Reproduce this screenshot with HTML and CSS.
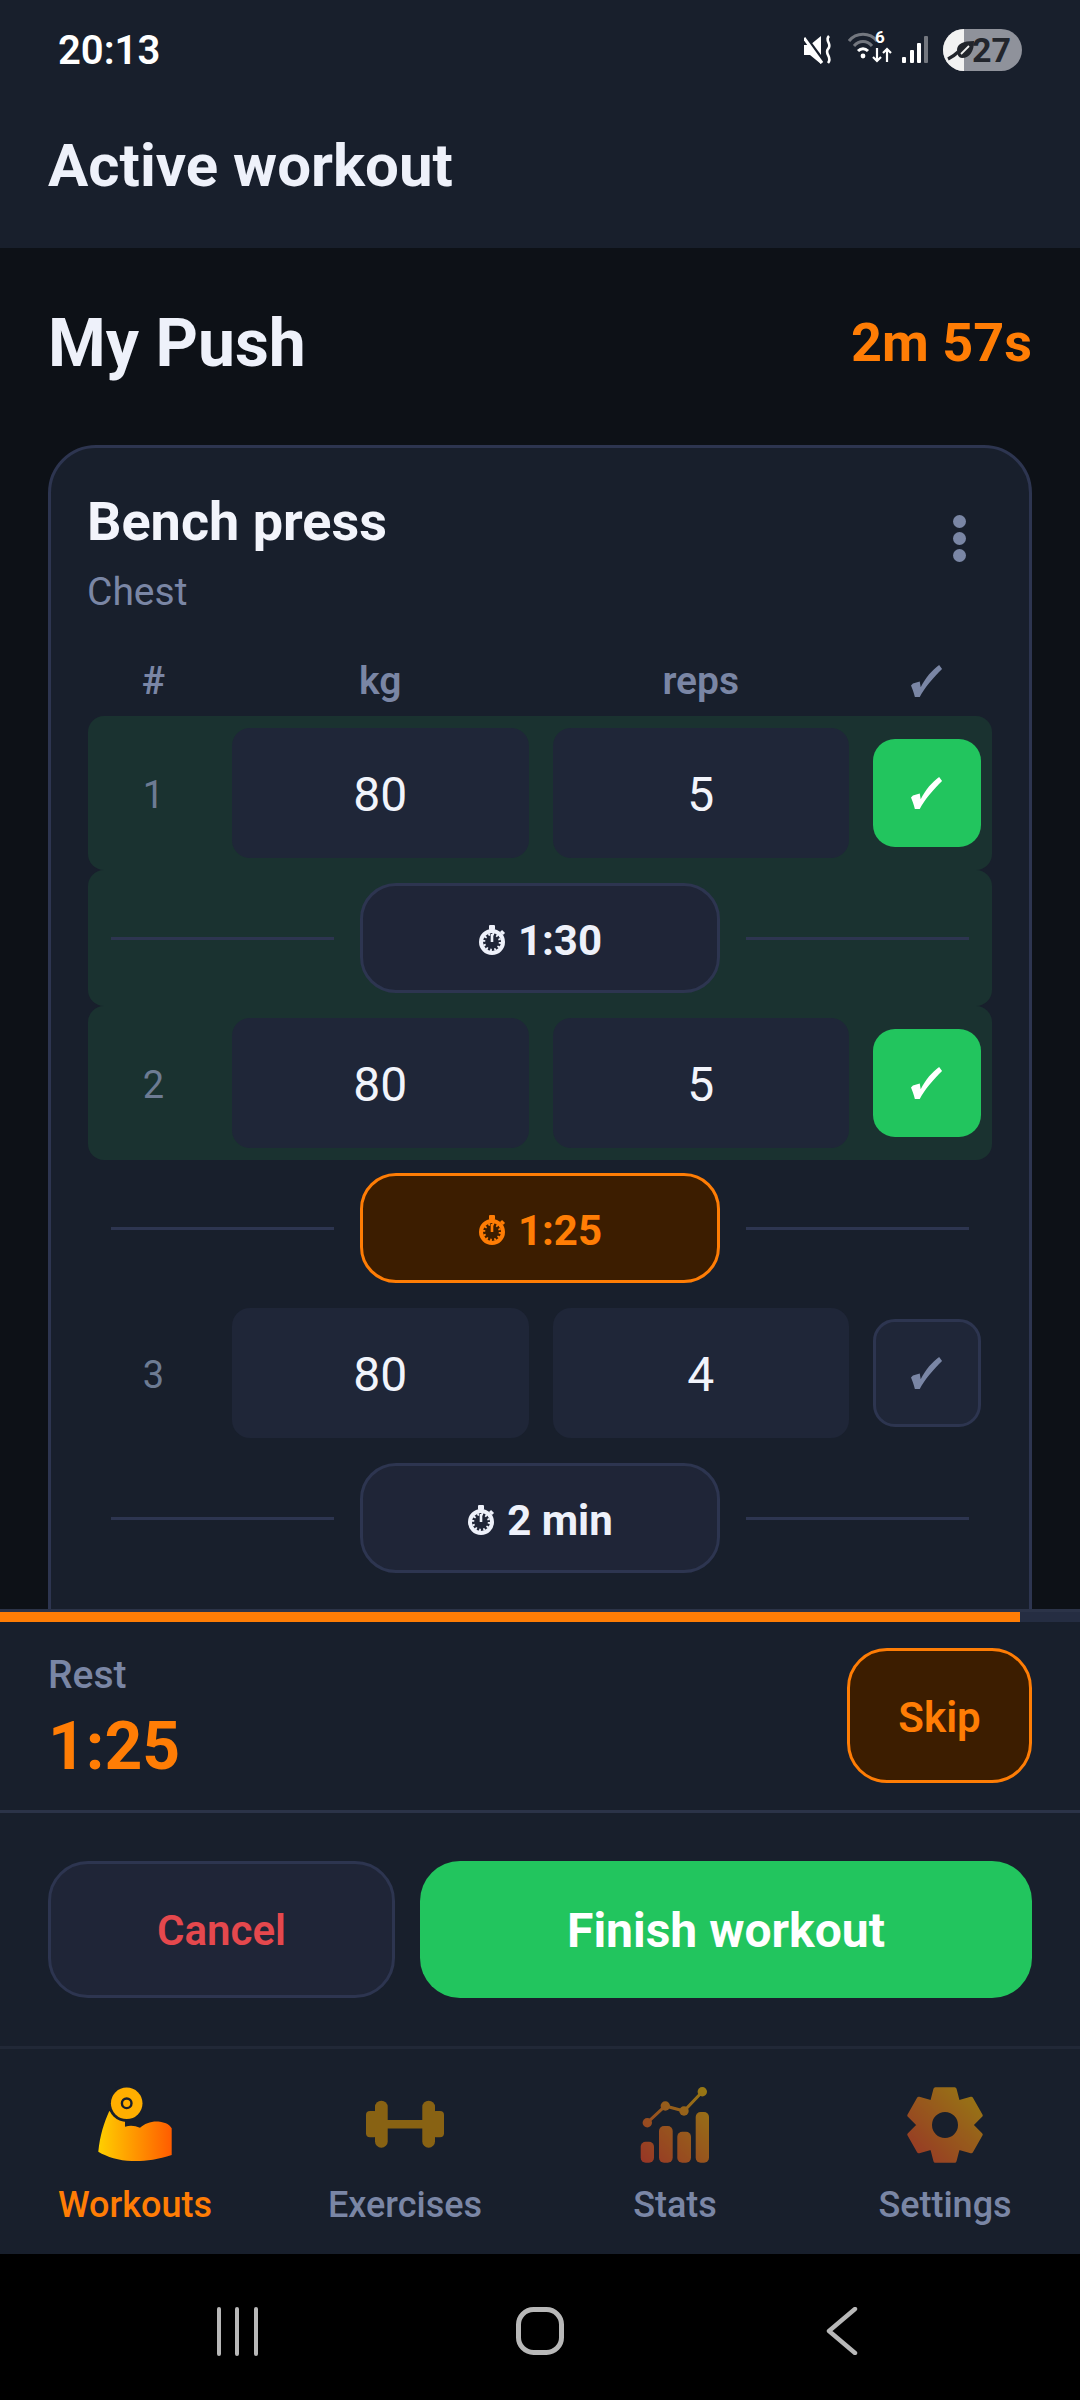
FILE: index.html
```html
<!DOCTYPE html>
<html lang="en">
<head>
    <meta charset="UTF-8">
    <meta name="viewport" content="width=device-width, initial-scale=1.0">
    <title>Active workout</title>
    <link rel="stylesheet" href="styles.css">
</head>
<body>
    <svg class="defs" width="0" height="0">
        <defs>
            <linearGradient id="arm-grad" gradientUnits="userSpaceOnUse" x1="3" y1="0" x2="78" y2="0">
                <stop offset="0" stop-color="#ffd000"/>
                <stop offset="1" stop-color="#ff5a00"/>
            </linearGradient>
            <linearGradient id="nav-grad" gradientUnits="userSpaceOnUse" x1="5" y1="75" x2="75" y2="5">
                <stop offset="0" stop-color="#ff4a22"/>
                <stop offset="1" stop-color="#ffc400"/>
            </linearGradient>
            <symbol id="watch" viewBox="0 0 28 30">
                <rect x="11" y="0" width="6" height="5" rx="1" fill="currentColor"/>
                <path d="M23 6 L26 9" stroke="currentColor" stroke-width="3" fill="none"/>
                <circle cx="14" cy="17" r="11" fill="none" stroke="currentColor" stroke-width="4"/>
                <circle cx="14" cy="17" r="8" fill="none" stroke="currentColor" stroke-width="2.4" stroke-dasharray="1.8 2.4"/>
                <path d="M14 9 V17" stroke="currentColor" stroke-width="2.6" fill="none"/>
            </symbol>
            <symbol id="check" viewBox="0 0 34 36">
                <path d="M0 22 L2 20 L9 18 L10 24 C15 14 22 6 29 1 L32 5 C23 14 14 24 9 34 L4 34 C3 29 1 25 0 22 Z" fill="currentColor"/>
            </symbol>
        </defs>
    </svg>

    <div class="screen">
        <header class="top">
            <div class="status-bar">
                <span class="clock">20:13</span>
                <div class="status-icons">
                    <svg class="ic-mute" width="30" height="30" viewBox="0 0 30 30">
                        <path d="M0 10 H6 L17 1 V29 L6 20 H0 Z" fill="#fff"/>
                        <path d="M1 1 L21 28" stroke="#181f2c" stroke-width="3"/>
                        <path d="M0 3 L18 28" stroke="#fff" stroke-width="3"/>
                        <path d="M25 1 C20 6 29 9 24 14 C20 19 29 22 24 28" stroke="#fff" stroke-width="2.6" fill="none"/>
                    </svg>
                    <div class="wifi">
                        <svg width="30" height="30" viewBox="0 0 30 30">
                            <path d="M1 12 C8 3 22 3 29 12" stroke="#73777f" stroke-width="3" fill="none"/>
                            <path d="M6 17 C11 11 19 11 24 17" stroke="#73777f" stroke-width="3" fill="none"/>
                            <path d="M10 22 C13 19 17 19 20 22" stroke="#fff" stroke-width="3" fill="none"/>
                            <circle cx="15" cy="27" r="2.4" fill="#fff"/>
                        </svg>
                        <span class="wifi-six">6</span>
                        <svg class="wifi-arrows" width="20" height="16" viewBox="0 0 20 16">
                            <path d="M5 1 V14 M1 10 L5 14 L9 10" stroke="#fff" stroke-width="2.2" fill="none"/>
                            <path d="M15 15 V2 M11 6 L15 2 L19 6" stroke="#fff" stroke-width="2.2" fill="none"/>
                        </svg>
                    </div>
                    <svg width="26" height="28" viewBox="0 0 26 28">
                        <rect x="0" y="21" width="4" height="6" rx="1" fill="#fff"/>
                        <rect x="8" y="14" width="4" height="13" rx="1" fill="#fff"/>
                        <rect x="15" y="7" width="4" height="20" rx="1" fill="#fff"/>
                        <rect x="22" y="0" width="4" height="27" rx="1" fill="#73777f"/>
                    </svg>
                    <div class="battery">
                        <div class="battery-fill"></div>
                        <svg class="battery-leaf" width="79" height="42" viewBox="0 0 79 42">
                            <path d="M14 21 C14 15 20 12 31 12 C31 22 27 29 19 29 C16 29 14 26 14 21 Z" fill="#22252c"/>
                            <path d="M5 30 C9 28 12 26 15 23" stroke="#22252c" stroke-width="3.2" fill="none"/>
                            <path d="M18 25 L26 17" stroke="#f2f2f2" stroke-width="1.8" fill="none"/>
                        </svg>
                        <span class="battery-num">27</span>
                    </div>
                </div>
            </div>
            <div class="app-bar">
                <h1>Active workout</h1>
            </div>
        </header>

        <main class="content">
            <div class="workout-head">
                <h2>My Push</h2>
                <span class="elapsed">2m 57s</span>
            </div>

            <section class="card">
                <div class="card-head">
                    <div>
                        <div class="ex-name">Bench press</div>
                        <div class="ex-muscle">Chest</div>
                    </div>
                    <div class="more">
                        <span></span><span></span><span></span>
                    </div>
                </div>

                <div class="set-grid set-labels">
                    <span>#</span>
                    <span>kg</span>
                    <span>reps</span>
                    <span class="tick-label"><svg class="check"><use href="#check"/></svg></span>
                </div>

                <div class="set-grid set-row done">
                    <span class="set-num">1</span>
                    <div class="field">80</div>
                    <div class="field">5</div>
                    <button class="tick on"><svg class="check"><use href="#check"/></svg></button>
                </div>
                <div class="rest-row done">
                    <div class="rest-line"></div>
                    <button class="pill"><svg class="watch"><use href="#watch"/></svg>1:30</button>
                    <div class="rest-line"></div>
                </div>
                <div class="set-grid set-row done">
                    <span class="set-num">2</span>
                    <div class="field">80</div>
                    <div class="field">5</div>
                    <button class="tick on"><svg class="check"><use href="#check"/></svg></button>
                </div>
                <div class="rest-row">
                    <div class="rest-line"></div>
                    <button class="pill running"><svg class="watch"><use href="#watch"/></svg>1:25</button>
                    <div class="rest-line"></div>
                </div>
                <div class="set-grid set-row">
                    <span class="set-num">3</span>
                    <div class="field">80</div>
                    <div class="field">4</div>
                    <button class="tick"><svg class="check"><use href="#check"/></svg></button>
                </div>
                <div class="rest-row">
                    <div class="rest-line"></div>
                    <button class="pill"><svg class="watch"><use href="#watch"/></svg>2 min</button>
                    <div class="rest-line"></div>
                </div>
            </section>
        </main>

        <section class="rest-panel">
            <div class="progress"><div class="progress-bar"></div></div>
            <div class="rest-body">
                <div>
                    <div class="rest-label">Rest</div>
                    <div class="rest-time">1:25</div>
                </div>
                <button class="skip">Skip</button>
            </div>
        </section>

        <section class="actions">
            <button class="cancel">Cancel</button>
            <button class="finish">Finish workout</button>
        </section>

        <nav class="tabs">
            <div class="tab active">
                <svg class="tab-icon" viewBox="0 0 80 80">
                    <path d="M3.3 66.7 C5 50 9 38 14.3 26 L30 36 L30 41.7 C35 40 40 40.5 45 42.7 C50 38 58 35.5 65 36.7 C71 37.5 75 40 76.7 43.3 L76.7 70 C62 75 48 76.5 36.7 76 C24 75.5 12 72 3.3 66.7 Z" fill="url(#arm-grad)"/>
                    <circle cx="31.7" cy="18.3" r="18.6" fill="#181f2c"/>
                    <circle cx="31.7" cy="18.3" r="15.8" fill="#ffae00"/>
                    <circle cx="31.7" cy="18.3" r="4.8" fill="none" stroke="#181f2c" stroke-width="2.4"/>
                </svg>
                <span>Workouts</span>
            </div>
            <div class="tab">
                <svg class="tab-icon" viewBox="0 0 80 80">
                    <g fill="#e59a00">
                        <rect x="21" y="35" width="38" height="8.5"/>
                        <rect x="10" y="15.7" width="12.7" height="47" rx="6.3"/>
                        <rect x="57.3" y="15.7" width="12.7" height="47" rx="6.3"/>
                        <rect x="1" y="26" width="12" height="26.3" rx="4"/>
                        <rect x="67" y="26" width="12" height="26.3" rx="4"/>
                    </g>
                </svg>
                <span>Exercises</span>
            </div>
            <div class="tab">
                <svg class="tab-icon" viewBox="0 0 80 80">
                    <g fill="url(#nav-grad)">
                        <rect x="5.7" y="56.7" width="13.3" height="21" rx="5"/>
                        <rect x="24" y="41" width="13.7" height="36.7" rx="5"/>
                        <rect x="42.3" y="46.7" width="13.7" height="31" rx="5"/>
                        <rect x="60.7" y="27" width="13.3" height="50.7" rx="5"/>
                        <circle cx="12.3" cy="37.7" r="4.7"/>
                        <circle cx="30.3" cy="21" r="4.7"/>
                        <circle cx="49" cy="26" r="4.7"/>
                        <circle cx="67.3" cy="6.7" r="4.7"/>
                    </g>
                    <path d="M12.3 37.7 L30.3 21 L49 26 L67.3 6.7" fill="none" stroke="url(#nav-grad)" stroke-width="3"/>
                </svg>
                <span>Stats</span>
            </div>
            <div class="tab">
                <svg class="tab-icon" viewBox="0 0 80 80">
                    <path fill-rule="evenodd" fill="url(#nav-grad)" stroke="url(#nav-grad)" stroke-width="4" stroke-linejoin="round" d="M30.4 4.3 H49.6 L53 17.5 L66.2 13.8 L75.7 30.4 L66 40 L75.7 49.6 L66.2 66.2 L53 62.5 L49.6 75.7 H30.4 L27 62.5 L13.8 66.2 L4.3 49.6 L14 40 L4.3 30.4 L13.8 13.8 L27 17.5 Z M40 25 A15 15 0 1 0 40 55 A15 15 0 1 0 40 25 Z"/>
                </svg>
                <span>Settings</span>
            </div>
        </nav>

        <footer class="system-nav">
            <svg width="44" height="49" viewBox="0 0 44 49" class="sys-recents">
                <path d="M4 2 V47 M22 2 V47 M41 2 V47" stroke="#b8b8b8" stroke-width="4" stroke-linecap="round" fill="none"/>
            </svg>
            <svg width="48" height="48" viewBox="0 0 48 48">
                <rect x="2.5" y="2.5" width="43" height="43" rx="15" stroke="#b8b8b8" stroke-width="5" fill="none"/>
            </svg>
            <svg width="32" height="48" viewBox="0 0 32 48" class="sys-back">
                <path d="M29 2 L3 24 L29 46" stroke="#b8b8b8" stroke-width="4.4" stroke-linecap="round" stroke-linejoin="round" fill="none"/>
            </svg>
        </footer>
    </div>
</body>
</html>
```

FILE: styles.css
```css
* {
    box-sizing: border-box;
}
body {
    margin: 0;
    background-color: #0d1117;
    color: #eef1fa;
    font-family: Roboto, "Liberation Sans", sans-serif;
}
button {
    font-family: inherit;
    border: none;
    padding: 0;
    cursor: pointer;
}
.defs {
    position: absolute;
}
.screen {
    width: 1080px;
    height: 2400px;
    display: flex;
    flex-direction: column;
    overflow: hidden;
}

/* top */
.top {
    background-color: #181f2c;
}
.status-bar {
    height: 80px;
    padding: 20px 58px 0 58px;
    display: flex;
    align-items: center;
    justify-content: space-between;
}
.clock {
    font-size: 40px;
    font-weight: 600;
    color: #fff;
}
.status-icons {
    display: flex;
    align-items: center;
}
.ic-mute {
    margin-right: 14px;
}
.wifi {
    position: relative;
    width: 44px;
    height: 42px;
    margin-right: 10px;
}
.wifi svg {
    display: block;
}
.wifi-six {
    position: absolute;
    left: 27px;
    top: -2px;
    font-size: 17px;
    font-weight: 700;
    color: #fff;
}
.wifi-arrows {
    position: absolute;
    left: 24px;
    top: 18px;
}
.battery {
    position: relative;
    width: 79px;
    height: 42px;
    margin-left: 15px;
    border-radius: 21px;
    background-color: #8f929b;
    overflow: hidden;
    display: flex;
    align-items: center;
    justify-content: flex-end;
    padding-right: 11px;
}
.battery-fill {
    position: absolute;
    left: 0;
    top: 0;
    bottom: 0;
    width: 21px;
    background-color: #f2f2f2;
}
.battery-leaf {
    position: absolute;
    left: 0;
    top: 0;
}
.battery-num {
    position: relative;
    font-size: 34px;
    font-weight: 700;
    color: #22252c;
}
.app-bar {
    height: 168px;
    padding: 0 48px;
    display: flex;
    align-items: center;
}
h1 {
    margin: 2px 0 0;
    font-size: 60px;
    font-weight: 700;
    color: #eef1fa;
}

/* content */
.content {
    flex: 1;
    min-height: 0;
    overflow: hidden;
    padding: 0 48px;
}
.workout-head {
    height: 188px;
    margin-bottom: 9px;
    display: flex;
    align-items: center;
    justify-content: space-between;
}
h2 {
    margin: 2px 0 0;
    font-size: 66px;
    font-weight: 700;
    color: #eef1fa;
}
.elapsed {
    font-size: 54px;
    font-weight: 700;
    color: #ff7d05;
}
.card {
    border: 3px solid #2d3550;
    border-radius: 48px;
    background-color: #181f2c;
    padding: 0 37px 100px;
}
.card-head {
    display: flex;
    justify-content: space-between;
    margin-left: -1px;
    padding-top: 44px;
}
.ex-name {
    font-size: 54px;
    line-height: 60px;
    font-weight: 700;
    color: #f2f4fb;
}
.ex-muscle {
    margin-top: 18px;
    font-size: 39px;
    line-height: 44px;
    color: #7a86a5;
}
.more {
    display: flex;
    flex-direction: column;
    gap: 4px;
    margin: 23px 26px 0 0;
}
.more span {
    width: 13px;
    height: 13px;
    border-radius: 50%;
    background-color: #7a86a5;
}
.set-grid {
    display: grid;
    grid-template-columns: 109px 1fr 1fr 108px;
    column-gap: 24px;
    align-items: center;
    padding: 0 11px;
    text-align: center;
}
.set-labels {
    height: 72px;
    margin-top: 30px;
    padding-top: 2px;
    font-size: 39px;
    font-weight: 600;
    color: #7a86a5;
}
.tick-label {
    display: flex;
    justify-content: center;
}
.check {
    width: 33px;
    height: 35px;
}
.set-row {
    height: 154px;
}
.done {
    background-color: #1a3230;
    border-radius: 16px;
}
.set-num {
    padding-top: 4px;
    font-size: 38px;
    color: #6d7b93;
}
.field {
    height: 130px;
    border-radius: 18px;
    background-color: #1f2638;
    font-size: 48px;
    line-height: 134px;
    color: #f2f4fb;
}
.tick {
    width: 108px;
    height: 108px;
    border: 3px solid #2d3550;
    border-radius: 22px;
    background-color: #1f2638;
    display: flex;
    align-items: center;
    justify-content: center;
    color: #7a86a5;
}
.tick.on {
    border: none;
    background-color: #22c55e;
    color: #fff;
}
.rest-row {
    height: 136px;
    padding: 0 23px;
    display: flex;
    align-items: center;
    gap: 26px;
}
.rest-line {
    flex: 1;
    height: 3px;
    background-color: #2d3550;
}
.pill {
    width: 360px;
    height: 110px;
    padding-top: 4px;
    border: 3px solid #2d3550;
    border-radius: 36px;
    background-color: #1f2537;
    display: flex;
    align-items: center;
    justify-content: center;
    gap: 12px;
    font-size: 42px;
    font-weight: 700;
    color: #eef1fa;
}
.pill.running {
    border-color: #ff7d05;
    background-color: #3c1d00;
    color: #ff7d05;
}
.watch {
    width: 28px;
    height: 30px;
}

/* rest timer */
.rest-panel {
    background-color: #181f2c;
    border-bottom: 3px solid #2b3348;
}
.progress {
    height: 13px;
    border-top: 3px solid #2b3348;
    background-color: #252d42;
}
.progress-bar {
    width: 1020px;
    height: 10px;
    background-color: #ff7d05;
}
.rest-body {
    height: 188px;
    padding: 26px 48px 0;
    display: flex;
    justify-content: space-between;
    align-items: flex-start;
}
.rest-label {
    margin-top: 5px;
    font-size: 39px;
    line-height: 44px;
    font-weight: 500;
    color: #7a86a5;
}
.rest-time {
    margin-top: 12px;
    font-size: 66px;
    line-height: 76px;
    font-weight: 700;
    color: #ff7d05;
}
.skip {
    width: 185px;
    height: 135px;
    padding-top: 4px;
    border: 3px solid #ff7d05;
    border-radius: 40px;
    background-color: #3c1d00;
    font-size: 42px;
    font-weight: 600;
    color: #ff7d05;
}

/* bottom */
.actions {
    height: 233px;
    padding: 48px 48px 0;
    display: flex;
    gap: 25px;
    background-color: #181f2c;
}
.cancel, .finish {
    height: 137px;
    padding-top: 2px;
    border-radius: 40px;
}
.cancel {
    width: 347px;
    border: 3px solid #2d3550;
    background-color: #1f2537;
    font-size: 42px;
    font-weight: 600;
    color: #e5484d;
}
.finish {
    flex: 1;
    background-color: #22c55e;
    font-size: 48px;
    font-weight: 700;
    color: #fff;
}
.tabs {
    height: 208px;
    border-top: 3px solid #212837;
    background-color: #181f2c;
    display: grid;
    grid-template-columns: repeat(4, 1fr);
}
.tab {
    padding-top: 36px;
    display: flex;
    flex-direction: column;
    align-items: center;
    font-size: 36px;
    line-height: 44px;
    font-weight: 500;
    color: #7a86a5;
}
.tab-icon {
    width: 80px;
    height: 80px;
    margin-bottom: 18px;
    opacity: 0.55;
}
.tab.active {
    color: #ff7d05;
}
.tab.active .tab-icon {
    opacity: 1;
}
.system-nav {
    height: 146px;
    background-color: #000;
    display: flex;
    align-items: center;
    padding: 8px 0 0 215px;
}
.sys-recents {
    margin-right: 257px;
}
.sys-back {
    margin-left: 262px;
}
```
